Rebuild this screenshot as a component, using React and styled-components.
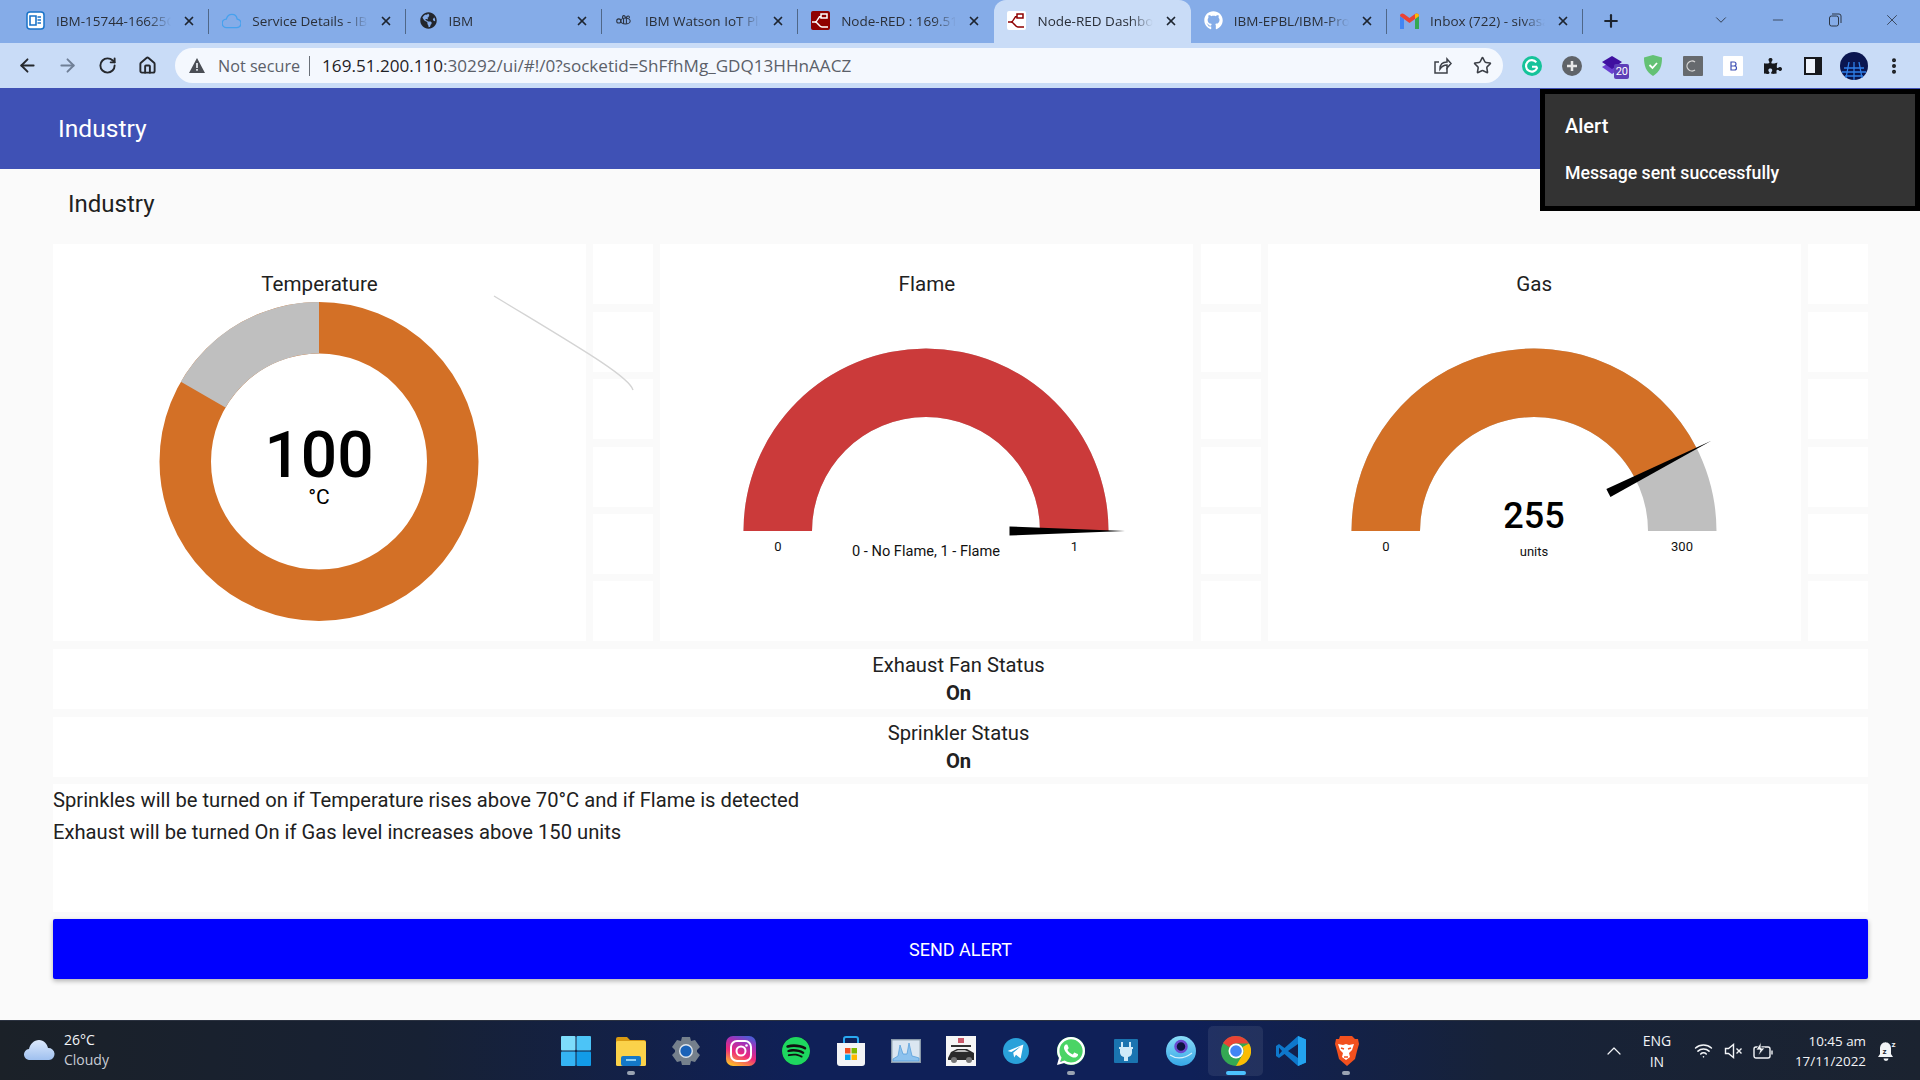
import React from 'react';
import styled, { createGlobalStyle } from 'styled-components';
import {
  ArrowLeft, ArrowRight, RotateCw, Home, Star, MoreVertical, X, Plus, ChevronDown, ChevronUp,
  Minus, Wifi,
} from 'lucide-react';
import { FaGithub, FaGlobeAmericas, FaPuzzlePiece, FaWhatsapp, FaSpotify } from 'react-icons/fa';

const GlobalStyle = createGlobalStyle`
  html, body { margin: 0; padding: 0; height: 100%; overflow: hidden; }
  body { font-family: Roboto, "Liberation Sans", sans-serif; background: #fafafa; color: #212121; }
  * { box-sizing: border-box; }
`;

const Screen = styled.div`
  position: relative;
  width: 1920px;
  height: 1080px;
  display: flex;
  flex-direction: column;
  overflow: hidden;
`;

/* browser chrome */
const TabStrip = styled.div`
  height: 43px;
  background: #85ace8;
  display: flex;
  padding-left: 13px;
`;

const Tab = styled.div`
  position: relative;
  width: 196.3px;
  height: 43px;
  display: flex;
  align-items: center;
  gap: 11px;
  padding: 0 13px 2px;
  background: ${(p) => (p.$active ? '#c9dcf7' : 'transparent')};
  border-radius: ${(p) => (p.$active ? '12px 12px 0 0' : '0')};
  font: 13.5px "Open Sans", sans-serif;
  color: #2a2f38;

  &::after {
    content: '';
    display: ${(p) => (p.$sep ? 'block' : 'none')};
    position: absolute;
    right: 0;
    top: 9px;
    bottom: 9px;
    width: 1px;
    background: #4f6788;
  }
`;

const TabIcon = styled.span`
  flex: none;
  width: 19px;
  height: 19px;
  display: flex;
  align-items: center;
  justify-content: center;
`;

const TabTitle = styled.span`
  flex: 1;
  min-width: 0;
  white-space: nowrap;
  overflow: hidden;
  mask-image: linear-gradient(to right, #000 80%, transparent 100%);
`;

const NewTab = styled.div`
  width: 56px;
  padding-bottom: 2px;
  display: flex;
  align-items: center;
  justify-content: center;
  color: #1c2430;
`;

const WindowControls = styled.div`
  margin-left: auto;
  padding-bottom: 4px;
  display: flex;
  align-items: center;
  color: #2c3644;
`;

const WindowButton = styled.div`
  width: 57px;
  display: flex;
  justify-content: center;
`;

const Toolbar = styled.div`
  height: 45px;
  background: #c9dcf7;
  display: flex;
  align-items: center;
  padding-left: 7px;
`;

const NavButton = styled.div`
  width: 40px;
  display: flex;
  justify-content: center;
  color: ${(p) => (p.$dim ? '#6f7f96' : '#25282d')};
`;

const Omnibox = styled.div`
  width: 1328px;
  height: 35px;
  margin-left: 8px;
  border-radius: 18px;
  background: #f4f8fe;
  display: flex;
  align-items: center;
  padding: 0 10px 0 14px;
  font: 17.1px "Open Sans", sans-serif;
  color: #5b6069;
`;

const NotSecure = styled.span`
  font-size: 16.2px;
  margin-left: 13px;
  padding-right: 9px;
  margin-right: 12px;
  border-right: 1px solid #6a7078;
  line-height: 20px;
`;

const Host = styled.span`
  color: #1f2226;
`;

const OmniActions = styled.div`
  margin-left: auto;
  display: flex;
  gap: 21px;
  color: #3c4048;
  padding-right: 1px;
`;

const Extensions = styled.div`
  display: flex;
  align-items: center;
  padding-left: 9px;
  color: #17191d;
`;

const ExtSlot = styled.span`
  position: relative;
  width: 40.2px;
  display: flex;
  justify-content: center;
`;

const ExtBadge = styled.span`
  position: absolute;
  left: 22px;
  top: 9px;
  width: 15px;
  height: 15px;
  border-radius: 2px;
  background: #5d3fb8;
  color: #fff;
  text-align: center;
  font: 11px/15px Roboto, sans-serif;
`;

/* dashboard */
const AppBar = styled.header`
  height: 81px;
  background: #3f51b5;
  color: #fff;
  display: flex;
  align-items: center;
  padding-left: 58px;
  font-size: 24.6px;
`;

const Main = styled.main`
  flex: 1;
  padding: 0 52px 0 53px;
  display: flex;
  flex-direction: column;
  gap: 7.6px;
`;

const PageTitle = styled.h1`
  margin: 0;
  height: 67.6px;
  padding: 21px 0 0 15px;
  font-size: 24px;
  line-height: 28px;
  font-weight: 400;
`;

const GaugeRow = styled.div`
  display: flex;
  gap: 7.2px;
`;

const GaugeCard = styled.section`
  width: 533px;
  height: 397.2px;
  background: #fff;
  display: flex;
  flex-direction: column;
  align-items: center;
`;

const GaugeTitle = styled.div`
  height: 52px;
  padding-top: 28px;
  font-size: 20.6px;
  line-height: 24px;
`;

const GaugeChart = styled.svg`
  display: block;
  overflow: visible;
  position: relative;
`;

const Spacers = styled.div`
  width: 60px;
  display: grid;
  grid-auto-rows: 60px;
  row-gap: 7.44px;
`;

const Spacer = styled.div`
  background: #fff;
`;

const StatusRow = styled.div`
  height: 60px;
  background: #fff;
  display: flex;
  flex-direction: column;
  align-items: center;
  padding: 2.5px 4px 0 0;
  font-size: 20.2px;
  line-height: 28px;
`;

const StatusValue = styled.b`
  font-weight: 700;
`;

const Notes = styled.div`
  height: 127.6px;
  background: #fff;
  font-size: 20.2px;
  line-height: 32px;
`;

const SendButton = styled.button`
  height: 60px;
  border: 0;
  border-radius: 2px;
  background: #0000ff;
  color: #fff;
  font: 18px Roboto, sans-serif;
  text-transform: uppercase;
  box-shadow: 0 2px 5px rgba(0, 0, 0, 0.3);
`;

const Toast = styled.aside`
  position: absolute;
  top: 89px;
  right: 0;
  width: 380px;
  height: 122px;
  border: 5px solid #000;
  background: #333;
  color: #fff;
  padding: 20px 20px;
`;

const ToastTitle = styled.div`
  font-size: 20px;
  font-weight: 500;
  line-height: 24px;
  margin-bottom: 24px;
`;

const ToastBody = styled.div`
  font-size: 17.7px;
  font-weight: 500;
  line-height: 23px;
`;

/* taskbar */
const Taskbar = styled.footer`
  height: 60px;
  background: linear-gradient(90deg, #1b2128 0%, #172134 22%, #0f2058 42%, #0f2058 62%, #172238 78%, #1b2330 100%);
  border-top: 1px solid #2b3240;
  display: flex;
  align-items: center;
  color: #f2f4f7;
  font: 14px "Open Sans", sans-serif;
`;

const Weather = styled.div`
  width: 548px;
  padding: 0 0 2px 24px;
  display: flex;
  align-items: center;
  gap: 9px;
  line-height: 20px;
`;

const WeatherNote = styled.div`
  color: #c8ccd4;
`;

const AppIcons = styled.div`
  display: flex;
`;

const AppIcon = styled.div`
  position: relative;
  width: 55px;
  height: 50px;
  display: flex;
  align-items: center;
  justify-content: center;
  border-radius: 5px;
  background: ${(p) => (p.$active ? 'rgba(255,255,255,0.08)' : 'transparent')};

  &::after {
    content: '';
    display: ${(p) => (p.$dot || p.$active ? 'block' : 'none')};
    position: absolute;
    bottom: 1px;
    left: 50%;
    width: ${(p) => (p.$active ? '20px' : '8px')};
    height: 4px;
    border-radius: 3px;
    transform: translateX(-50%);
    background: ${(p) => (p.$active ? '#4cc2ff' : '#9aa3b2')};
  }
`;

const LogoDisc = styled.span`
  width: ${(p) => p.$size}px;
  height: ${(p) => p.$size}px;
  border-radius: 50%;
  background: ${(p) => p.$bg};
  display: flex;
  align-items: center;
  justify-content: center;
`;

const Tray = styled.div`
  margin-left: auto;
  display: flex;
  align-items: center;
  padding-right: 24px;
`;

const TraySlot = styled.div`
  width: ${(p) => p.$w}px;
  margin-right: ${(p) => p.$gap || 0}px;
  display: flex;
  justify-content: center;
  text-align: center;
  font-size: 14px;
  line-height: 21px;
`;

const Clock = styled.div`
  margin-right: 11px;
  text-align: right;
  font-size: 13.4px;
  line-height: 20px;
`;

/* gauge drawing */
const ORANGE = '#d37026';
const GREY = '#bfbfbf';
const polar = (cx, cy, r, a) => [cx + r * Math.cos(a), cy - r * Math.sin(a)];

function ringSlice(cx, cy, outer, inner, a0, a1, large = 0) {
  const [x0, y0] = polar(cx, cy, outer, a0);
  const [x1, y1] = polar(cx, cy, outer, a1);
  const [x2, y2] = polar(cx, cy, inner, a1);
  const [x3, y3] = polar(cx, cy, inner, a0);
  return `M${x0} ${y0}A${outer} ${outer} 0 ${large} 1 ${x1} ${y1}L${x2} ${y2}A${inner} ${inner} 0 ${large} 0 ${x3} ${y3}Z`;
}

const CX = 266;
const CY = 235;

const Scale = ({ x, y, size = 13, children, weight, fill = '#111' }) => (
  <text x={x} y={y} textAnchor="middle" fontSize={size} fontWeight={weight} fill={fill} fontFamily="Roboto, sans-serif">{children}</text>
);

const HalfGauge = ({ fraction, color, min, max, value, unit, unitSize, maxX }) => {
  const split = Math.PI * (1 - fraction);
  const tip = polar(CX, CY, 199, split);
  const base = polar(CX, CY, 83.5, split);
  const nx = Math.sin(split) * 4.5;
  const ny = Math.cos(split) * 4.5;
  return (
    <GaugeChart width="533" height="345" viewBox="0 0 533 345">
      <path d={ringSlice(CX, CY, 182.5, 114, Math.PI, 0)} fill={GREY} />
      <path d={ringSlice(CX, CY, 182.5, 114, Math.PI, split)} fill={color} />
      <polygon points={`${base[0] - nx} ${base[1] - ny} ${base[0] + nx} ${base[1] + ny} ${tip[0]} ${tip[1]}`} fill="#000" />
      {value && <Scale x={CX} y={231.5} size={36} weight={500} fill="#000">{value}</Scale>}
      <Scale x={118} y={255}>{min}</Scale>
      <Scale x={maxX} y={255}>{max}</Scale>
      <Scale x={CX} y={260} size={unitSize}>{unit}</Scale>
    </GaugeChart>
  );
};

const DonutGauge = () => {
  const cy = 165.5;
  const split = (150 * Math.PI) / 180;
  return (
    <GaugeChart width="533" height="345" viewBox="0 0 533 345">
      <circle cx={CX} cy={cy} r={133.75} fill="none" stroke={ORANGE} strokeWidth="51.5" />
      <path d={ringSlice(CX, cy, 159.5, 108, split, Math.PI / 2)} fill={GREY} />
      <path d="M441 0C520 48 576 80 580 94" fill="none" stroke="#d4d4d4" strokeWidth="1.4" />
      <Scale x={CX} y={181} size={64} weight={500} fill="#000">100</Scale>
      <Scale x={CX} y={208} size={21} fill="#000">°C</Scale>
    </GaugeChart>
  );
};

/* small favicons and app logos */
const FlowMark = ({ bg, line }) => (
  <svg width="19" height="19" viewBox="0 0 19 19">
    <rect width="19" height="19" rx="2" fill={bg} />
    <path d="M1 11h3c3 0 3-6 6-6M10 3h6v4h-6zM4 11c3 0 4 5 7 5h6" fill="none" stroke={line} strokeWidth="1.5" />
  </svg>
);

const DocIcon = () => (
  <svg width="19" height="19" viewBox="0 0 19 19">
    <rect x="1" y="1" width="17" height="17" rx="3" fill="#fff" stroke="#1a73c8" strokeWidth="1.5" />
    <path d="M4 5h6v9H4zM11.5 6H15M11.5 9H15M11.5 12H15" fill="none" stroke="#1a73c8" strokeWidth="1.6" />
  </svg>
);

const CloudTab = () => (
  <svg width="20" height="19" viewBox="0 0 20 19">
    <path d="M5 17a4.5 4.5 0 0 1-.5-9C5.5 4.5 8 3 10.5 3c3 0 5 2 5.500 5a4.5 4.5 0 0 1-1 9z" fill="none" stroke="#46a1ee" strokeWidth="1.4" />
  </svg>
);

const BeeTab = () => (
  <svg width="20" height="19" viewBox="0 0 20 19" fill="none" stroke="#2b3340" strokeWidth="1.1">
    <ellipse cx="11" cy="10" rx="5" ry="3.2" />
    <path d="M9 7v6M12 7v6" />
    <circle cx="4" cy="10" r="2.2" />
    <path d="M8 7C7 4 11 3 11 7M12 7c0-3 4-3 3 0" />
  </svg>
);

const GmailIcon = () => (
  <svg width="19" height="16" viewBox="0 0 19 16">
    <path d="M0 3v13h4V6z" fill="#4285f4" />
    <path d="M19 3v13h-4V6z" fill="#34a853" />
    <path d="M0 3c0-3 3-3 4-2l5.5 4L15 1c1-1 4-1 4 2l-4 3-5.5 4L4 6z" fill="#ea4335" />
    <path d="M15 1c1-1 4-1 4 2l-4 3z" fill="#fbbc04" />
  </svg>
);

const ShareIcon = () => (
  <svg width="19" height="19" viewBox="0 0 19 19" fill="none" stroke="currentColor" strokeWidth="1.5">
    <path d="M14 12v5H2V6h4" />
    <path d="M7 13c0-5 3-7 7-7V3l4 4.5-4 4.5V9c-3 0-5 1-7 4z" />
  </svg>
);

const StartLogo = () => (
  <svg width="30" height="30" viewBox="0 0 30 30">
    <rect width="14.5" height="14.5" rx="1" fill="#7ddcfb" />
    <rect x="15.5" width="14.5" height="14.5" rx="1" fill="#4cc4f7" />
    <rect y="15.5" width="14.5" height="14.5" rx="1" fill="#35b4f4" />
    <rect x="15.5" y="15.5" width="14.5" height="14.5" rx="1" fill="#129be8" />
  </svg>
);

const FolderLogo = () => (
  <svg width="30" height="30" viewBox="0 0 30 30">
    <path d="M0 3a2 2 0 0 1 2-2h9l3 3h14a2 2 0 0 1 2 2v4H0z" fill="#d99a12" />
    <rect y="5" width="30" height="25" rx="1.5" fill="#fbd24a" />
    <rect x="5" y="20" width="20" height="10" rx="2" fill="#1478c8" />
    <rect x="10" y="23" width="10" height="2" fill="#8fd0f5" />
  </svg>
);

const SettingsLogo = () => (
  <svg width="30" height="30" viewBox="0 0 30 30">
    <path d="M11 1h8l1 4 4-1 5 7-3 3v2l3 3-5 7-4-1-1 4h-8l-1-4-4 1-5-7 3-3v-2L1 11l5-7 4 1z" fill="#75808c" />
    <circle cx="15" cy="15" r="7" fill="#dfe5ec" />
    <circle cx="15" cy="15" r="5.6" fill="#1a62b8" />
  </svg>
);

const InstaLogo = () => (
  <svg width="30" height="30" viewBox="0 0 30 30">
    <defs>
      <linearGradient id="ig" x1="0.3" y1="1" x2="0.7" y2="0">
        <stop offset="0" stopColor="#fdb92c" />
        <stop offset="0.4" stopColor="#ee2a7b" />
        <stop offset="0.75" stopColor="#a431b8" />
        <stop offset="1" stopColor="#4f5bd5" />
      </linearGradient>
    </defs>
    <rect width="30" height="30" rx="7" fill="url(#ig)" />
    <rect x="5" y="5" width="20" height="20" rx="6" fill="none" stroke="#fff" strokeWidth="2" />
    <circle cx="15" cy="15" r="4.5" fill="none" stroke="#fff" strokeWidth="2" />
    <circle cx="20.5" cy="9.5" r="1.3" fill="#fff" />
  </svg>
);

const StoreLogo = () => (
  <svg width="30" height="30" viewBox="0 0 30 30">
    <path d="M8 7V3a2 2 0 0 1 2-2h10a2 2 0 0 1 2 2v4" fill="none" stroke="#29a8f0" strokeWidth="2" />
    <path d="M1 7h28v20a3 3 0 0 1-3 3H4a3 3 0 0 1-3-3z" fill="#f3f4f6" />
    <rect x="9" y="12" width="5.5" height="5.5" fill="#f25022" />
    <rect x="15.5" y="12" width="5.5" height="5.5" fill="#7fba00" />
    <rect x="9" y="18.5" width="5.5" height="5.5" fill="#00a4ef" />
    <rect x="15.5" y="18.5" width="5.5" height="5.5" fill="#ffb900" />
  </svg>
);

const MonitorLogo = () => (
  <svg width="30" height="24" viewBox="0 0 30 24">
    <rect x="0.7" y="0.7" width="28.6" height="22.6" fill="#dbe6f1" stroke="#8898a8" strokeWidth="1.4" />
    <path d="M2 20l5-3 2-11 3 9 4 0 2-11 3 13 4 1 3 1v3H2z" fill="#8dc2ee" stroke="#4d9ad8" strokeWidth="0.7" />
  </svg>
);

const PhotoLogo = () => (
  <svg width="30" height="30" viewBox="0 0 30 30">
    <rect width="30" height="30" fill="#f6f6f6" />
    <rect x="12" y="2" width="6" height="5" fill="#c9596a" />
    <rect x="5" y="9" width="20" height="2" fill="#333" />
    <path d="M2 22l3-6 6-3h10l7 4v7H2z" fill="#2a2a2a" />
    <path d="M8 16l4-2h7l4 2z" fill="#bbb" />
    <circle cx="8" cy="24" r="3" fill="#777" />
    <circle cx="23" cy="24" r="3" fill="#777" />
  </svg>
);

const CircleGlyph = ({ bg, size = 28, children }) => (
  <svg width={size} height={size} viewBox="0 0 28 28">
    <circle cx="14" cy="14" r="14" fill={bg} />
    {children}
  </svg>
);

const PlugLogo = () => (
  <svg width="24" height="24" viewBox="0 0 24 24">
    <rect width="24" height="24" rx="1" fill="#1a74b0" />
    <path d="M8 3v6M16 3v6" stroke="#cfeaf8" strokeWidth="2" />
    <path d="M5 8h14v2h-1v4a5 5 0 0 1-4 4v4h-4v-4a5 5 0 0 1-4-4v-4H5z" fill="#cfeaf8" />
  </svg>
);

const RingLogo = () => (
  <svg width="30" height="30" viewBox="0 0 30 30">
    <defs>
      <linearGradient id="ringfill" x1="0" y1="0" x2="0" y2="1">
        <stop offset="0" stopColor="#8adcf8" />
        <stop offset="1" stopColor="#35a6e6" />
      </linearGradient>
    </defs>
    <circle cx="15" cy="15" r="15" fill="url(#ringfill)" />
    <circle cx="15" cy="10.5" r="5.5" fill="#0d1440" stroke="#6a4bd0" strokeWidth="2.5" />
    <path d="M4 19c6 4 14 4 22-2" fill="none" stroke="#d5f1fc" strokeWidth="1.2" />
  </svg>
);

const ChromeLogo = () => (
  <svg width="30" height="30" viewBox="0 0 30 30">
    <circle cx="15" cy="15" r="15" fill="#34a853" />
    <path d="M15 0a15 15 0 0 1 13 7.5H15a7.5 7.5 0 0 0-6.5 3.8L2 7A15 15 0 0 1 15 0z" fill="#ea4335" />
    <path d="M28 7.5a15 15 0 0 1-13 22.5l6.5-11.200A7.5 7.5 0 0 0 21.5 11z" fill="#fbbc04" />
    <circle cx="15" cy="15" r="7.5" fill="#fff" />
    <circle cx="15" cy="15" r="5.8" fill="#4285f4" />
  </svg>
);

const CodeLogo = () => (
  <svg width="30" height="30" viewBox="0 0 30 30">
    <path d="M22 0L8.5 12 3 8 0 10v10l3 2 5.5-4L22 30l8-3.5v-23zM22 8L12 15l10 7zM3 11.5L6 15l-3 3.5z" fill="#0e78cc" fillRule="evenodd" />
    <path d="M22 0l8 3.5v23L22 30V8z" fill="#23a3ef" />
  </svg>
);

const BraveLogo = () => (
  <svg width="26" height="30" viewBox="0 0 26 30">
    <path d="M7 0h12l3 3 3 0 1 5-2 7-2 8-8 7-8-7-2-8-2-7 1-5 3 0z" fill="#f2501e" />
    <path d="M5 8l5 1 3-1 3 1 5-1-2 6-3 3 1 4-4 3-4-3 1-4-3-3z" fill="#fff" />
    <path d="M8 12l3 1M18 12l-3 1M11 21h4" stroke="#f2501e" strokeWidth="1.4" />
  </svg>
);

const CloudWeather = () => (
  <svg width="31" height="20" viewBox="0 0 31 20">
    <defs>
      <linearGradient id="cloud" x1="0" y1="0" x2="0" y2="1">
        <stop offset="0" stopColor="#dce9fc" />
        <stop offset="1" stopColor="#9fc0ef" />
      </linearGradient>
    </defs>
    <path d="M6 20a5.5 5.5 0 0 1-1-11c1-5 5-9 10-9s8 4 9 8a6 6 0 0 1 1 12z" fill="url(#cloud)" />
  </svg>
);

const MutedSpeaker = () => (
  <svg width="20" height="18" viewBox="0 0 20 18" fill="none" stroke="#f2f4f7" strokeWidth="1.4">
    <path d="M1.5 6.5h3l5-4v13l-5-4h-3z" />
    <path d="M12.5 6.5l5 5M17.5 6.5l-5 5" />
  </svg>
);

const ChargingBattery = () => (
  <svg width="21" height="18" viewBox="0 0 21 18" fill="none" stroke="#f2f4f7" strokeWidth="1.4">
    <rect x="1" y="5" width="16" height="11" rx="2" />
    <path d="M19 8.5v4" />
    <path d="M8 0L3 8h4l-2 6 7-8H8z" fill="#f2f4f7" stroke="#1b2330" strokeWidth="0.8" />
  </svg>
);

const SnoozeBell = () => (
  <svg width="19" height="22" viewBox="0 0 19 22">
    <path d="M9 2a6 6 0 0 0-6 6v6l-2 3h15l-2-3V8a6 6 0 0 0-6-6zM6.5 18.5a2.5 2.5 0 0 0 5 0z" fill="#f2f4f7" />
    <text x="14.5" y="7" fontSize="8" fontWeight="700" fill="#f2f4f7" fontFamily="Roboto, sans-serif">z</text>
    <text x="5.5" y="13.5" fontSize="8" fontWeight="700" fill="#1b2330" fontFamily="Roboto, sans-serif">z</text>
  </svg>
);

const tabs = [
  { title: 'IBM-15744-16625G', icon: <DocIcon />, sep: true },
  { title: 'Service Details - IBM', icon: <CloudTab />, sep: true },
  { title: 'IBM', icon: <FaGlobeAmericas size={17} color="#23262c" />, sep: true },
  { title: 'IBM Watson IoT Pla', icon: <BeeTab />, sep: true },
  { title: 'Node-RED : 169.51', icon: <FlowMark bg="#8f0000" line="#fff" /> },
  { title: 'Node-RED Dashboa', icon: <FlowMark bg="#fff" line="#8f0000" />, active: true },
  { title: 'IBM-EPBL/IBM-Proj', icon: <FaGithub size={19} color="#fff" />, sep: true },
  { title: 'Inbox (722) - sivasa', icon: <GmailIcon />, sep: true },
];

const apps = [
  { key: 'start', logo: <StartLogo /> },
  { key: 'files', logo: <FolderLogo />, dot: true },
  { key: 'settings', logo: <SettingsLogo /> },
  { key: 'instagram', logo: <InstaLogo /> },
  { key: 'spotify', logo: <LogoDisc $size={28} $bg="#111"><FaSpotify size={30} color="#1ed760" /></LogoDisc> },
  { key: 'store', logo: <StoreLogo /> },
  { key: 'monitor', logo: <MonitorLogo /> },
  { key: 'photo', logo: <PhotoLogo /> },
  {
    key: 'telegram',
    logo: <CircleGlyph bg="#2aa1da" size={26}><path d="M5 14l17-7-3 15-5-4-2 3-1-5 8-7-10 6z" fill="#fff" /></CircleGlyph>,
  },
  { key: 'whatsapp', logo: <LogoDisc $size={28} $bg="#4ad465"><FaWhatsapp size={32} color="#fff" /></LogoDisc>, dot: true },
  { key: 'plug', logo: <PlugLogo /> },
  { key: 'ring', logo: <RingLogo /> },
  { key: 'chrome', logo: <ChromeLogo />, active: true },
  { key: 'code', logo: <CodeLogo /> },
  { key: 'brave', logo: <BraveLogo />, dot: true },
];

const App = () => (
  <Screen>
    <GlobalStyle />
    <TabStrip>
      {tabs.map((t) => (
        <Tab key={t.title} $active={t.active} $sep={t.sep}>
          <TabIcon>{t.icon}</TabIcon>
          <TabTitle>{t.title}</TabTitle>
          <X size={14} strokeWidth={3} color="#1e2530" />
        </Tab>
      ))}
      <NewTab><Plus size={20} strokeWidth={2.6} /></NewTab>
      <WindowControls>
        <WindowButton><ChevronDown size={18} strokeWidth={1.2} /></WindowButton>
        <WindowButton><Minus size={16} strokeWidth={1.2} /></WindowButton>
        <WindowButton>
          <svg width="14" height="14" viewBox="0 0 14 14" fill="none" stroke="currentColor">
            <rect x="1.5" y="3" width="9" height="10" rx="2" />
            <path d="M4 1h7a2 2 0 0 1 2 2v7" />
          </svg>
        </WindowButton>
        <WindowButton><X size={18} strokeWidth={1.1} /></WindowButton>
      </WindowControls>
    </TabStrip>

    <Toolbar>
      <NavButton><ArrowLeft size={21} strokeWidth={2.2} /></NavButton>
      <NavButton $dim><ArrowRight size={21} strokeWidth={2.2} /></NavButton>
      <NavButton><RotateCw size={19} strokeWidth={2.4} /></NavButton>
      <NavButton><Home size={19} strokeWidth={2.4} /></NavButton>
      <Omnibox>
        <svg width="16" height="15" viewBox="0 0 16 15">
          <path d="M8 0l8 15H0z" fill="#4a4e55" />
          <rect x="7.2" y="5" width="1.6" height="5" fill="#f4f8fe" />
          <rect x="7.2" y="11" width="1.6" height="1.7" fill="#f4f8fe" />
        </svg>
        <NotSecure>Not secure</NotSecure>
        <Host>169.51.200.110</Host>:30292/ui/#!/0?socketid=ShFfhMg_GDQ13HHnAACZ
        <OmniActions>
          <ShareIcon />
          <Star size={19} strokeWidth={2} />
        </OmniActions>
      </Omnibox>
      <Extensions>
        <ExtSlot>
          <CircleGlyph bg="#15c39a" size={20}>
            <path d="M20 9a8 8 0 1 0 1 8l-1-2h-6" fill="none" stroke="#fff" strokeWidth="3" />
          </CircleGlyph>
        </ExtSlot>
        <ExtSlot>
          <CircleGlyph bg="#5f6368" size={20}>
            <path d="M14 7v14M7 14h14" stroke="#e8e8e8" strokeWidth="3.5" />
          </CircleGlyph>
        </ExtSlot>
        <ExtSlot>
          <svg width="22" height="22" viewBox="0 0 22 22">
            <path d="M11 6l10 6-10 7L1 12z" fill="#6a3fd0" />
            <path d="M11 1l10 6-10 7L1 7z" fill="#3f10a0" />
          </svg>
          <ExtBadge>20</ExtBadge>
        </ExtSlot>
        <ExtSlot>
          <svg width="20" height="21" viewBox="0 0 20 21">
            <path d="M10 0l9 2.5c0 9-2 14-9 18.5C3 16.5 1 11.5 1 2.5z" fill="#63c174" />
            <path d="M6.5 10l3 3 4.5-5" fill="none" stroke="#fff" strokeWidth="1.8" />
          </svg>
        </ExtSlot>
        <ExtSlot>
          <svg width="20" height="20" viewBox="0 0 20 20">
            <rect width="20" height="20" rx="1" fill="#666a6e" />
            <path d="M12 6a5 5 0 1 0 0 8" fill="none" stroke="#d6d6d6" strokeWidth="1.3" />
          </svg>
        </ExtSlot>
        <ExtSlot>
          <svg width="20" height="20" viewBox="0 0 20 20">
            <rect width="20" height="20" rx="1" fill="#fff" />
            <path d="M8 6h3a2 2 0 0 1 0 4H8zM8 10h3.5a2 2 0 0 1 0 4H8z" fill="none" stroke="#3f51b5" strokeWidth="1.2" />
          </svg>
        </ExtSlot>
        <ExtSlot><FaPuzzlePiece size={18} /></ExtSlot>
        <ExtSlot>
          <svg width="18" height="18" viewBox="0 0 18 18">
            <rect x="1" y="1" width="16" height="16" fill="#eef3fb" stroke="#17191d" strokeWidth="2" />
            <rect x="11" y="1" width="6" height="16" fill="#17191d" />
          </svg>
        </ExtSlot>
        <ExtSlot>
          <svg width="28" height="28" viewBox="0 0 28 28">
            <circle cx="14" cy="14" r="14" fill="#0a1650" />
            <path d="M4 16h20M2 20h24M5 24h18M14 10v18M9 10L6 26M19 10l3 16" stroke="#2f7fe8" strokeWidth="1.3" />
          </svg>
        </ExtSlot>
        <ExtSlot><MoreVertical size={20} strokeWidth={2.8} /></ExtSlot>
      </Extensions>
    </Toolbar>

    <AppBar>Industry</AppBar>

    <Main>
      <PageTitle>Industry</PageTitle>
      <GaugeRow>
        <GaugeCard>
          <GaugeTitle>Temperature</GaugeTitle>
          <DonutGauge />
        </GaugeCard>
        <Spacers>{[0, 1, 2, 3, 4, 5].map((i) => <Spacer key={i} />)}</Spacers>
        <GaugeCard>
          <GaugeTitle>Flame</GaugeTitle>
          <HalfGauge fraction={1} color="#cb3a3a" min="0" max="1" maxX={414.5} unit="0 - No Flame, 1 - Flame" unitSize={14.6} />
        </GaugeCard>
        <Spacers>{[0, 1, 2, 3, 4, 5].map((i) => <Spacer key={i} />)}</Spacers>
        <GaugeCard>
          <GaugeTitle>Gas</GaugeTitle>
          <HalfGauge fraction={0.85} color={ORANGE} min="0" max="300" maxX={414} value="255" unit="units" unitSize={13} />
        </GaugeCard>
        <Spacers>{[0, 1, 2, 3, 4, 5].map((i) => <Spacer key={i} />)}</Spacers>
      </GaugeRow>
      <StatusRow>
        Exhaust Fan Status
        <StatusValue>On</StatusValue>
      </StatusRow>
      <StatusRow>
        Sprinkler Status
        <StatusValue>On</StatusValue>
      </StatusRow>
      <Notes>
        Sprinkles will be turned on if Temperature rises above 70°C and if Flame is detected
        <br />
        Exhaust will be turned On if Gas level increases above 150 units
      </Notes>
      <SendButton>Send Alert</SendButton>
    </Main>

    <Toast>
      <ToastTitle>Alert</ToastTitle>
      <ToastBody>Message sent successfully</ToastBody>
    </Toast>

    <Taskbar>
      <Weather>
        <CloudWeather />
        <div>
          <div>26°C</div>
          <WeatherNote>Cloudy</WeatherNote>
        </div>
      </Weather>
      <AppIcons>
        {apps.map((a) => (
          <AppIcon key={a.key} $dot={a.dot} $active={a.active}>{a.logo}</AppIcon>
        ))}
      </AppIcons>
      <Tray>
        <TraySlot $w={30} $gap={4}><ChevronUp size={24} strokeWidth={1.2} /></TraySlot>
        <TraySlot $w={48} $gap={8}><div>ENG<br />IN</div></TraySlot>
        <TraySlot $w={30}><Wifi size={19} strokeWidth={2} /></TraySlot>
        <TraySlot $w={30}><MutedSpeaker /></TraySlot>
        <TraySlot $w={30} $gap={16}><ChargingBattery /></TraySlot>
        <Clock>10:45 am<br />17/11/2022</Clock>
        <TraySlot $w={19}><SnoozeBell /></TraySlot>
      </Tray>
    </Taskbar>
  </Screen>
);

export default App;
